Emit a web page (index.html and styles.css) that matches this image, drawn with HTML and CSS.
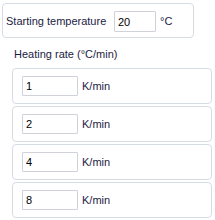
FILE: index.html
```html
<!DOCTYPE html>
<html>
<head>
<meta charset="utf-8">
<link rel="stylesheet" href="styles.css">
</head>
<body>
<div class="page">
  <div class="start-box">
    <span class="start-label">Starting temperature</span>
    <input class="field start-field" type="text" value="20">
    <span class="unit">°C</span>
  </div>
  <div class="heading">Heating rate (°C/min)</div>
  <div class="rows">
    <div class="row"><input class="field rate-field" type="text" value="1"><span class="unit">K/min</span></div>
    <div class="row"><input class="field rate-field" type="text" value="2"><span class="unit">K/min</span></div>
    <div class="row"><input class="field rate-field" type="text" value="4"><span class="unit">K/min</span></div>
    <div class="row"><input class="field rate-field" type="text" value="8"><span class="unit">K/min</span></div>
    <div class="row"></div>
  </div>
</div>
</body>
</html>
```
FILE: styles.css
```css
html, body {
  margin: 0;
  padding: 0;
  background: #ffffff;
  overflow: hidden;
}
.page {
  width: 215px;
  height: 220px;
  overflow: hidden;
  font-family: "Liberation Sans", Arial, sans-serif;
  font-size: 11px;
  color: #1c1c44;
}
.start-box {
  box-sizing: border-box;
  margin: 3px 0 0 2px;
  width: 192px;
  height: 35px;
  border: 1px solid #d6dce4;
  border-radius: 4px;
  padding-left: 3px;
  display: flex;
  align-items: center;
}
.start-label {
  width: 108px;
  flex: none;
  white-space: nowrap;
}
.field {
  box-sizing: border-box;
  border: 1px solid #cfd3d9;
  border-radius: 1px;
  background: #fff;
  font-family: "Liberation Sans", Arial, sans-serif;
  font-size: 11px;
  color: #000;
  padding: 0 0 0 3px;
  margin: 0;
  outline: none;
  flex: none;
}
.start-field {
  width: 42px;
  height: 21px;
  margin-top: 2px;
}
.unit {
  margin-left: 4px;
  white-space: nowrap;
}
.heading {
  margin: 9px 0 7px 14px;
  line-height: 14px;
  white-space: nowrap;
}
.rows {
  display: flex;
  flex-direction: column;
  gap: 2px;
  margin-left: 12px;
}
.row {
  box-sizing: border-box;
  width: 200px;
  height: 36px;
  flex: none;
  border: 1px solid #d6dce4;
  border-radius: 4px;
  padding-left: 9px;
  display: flex;
  align-items: center;
}
.rate-field {
  width: 56px;
  height: 20px;
}
```
